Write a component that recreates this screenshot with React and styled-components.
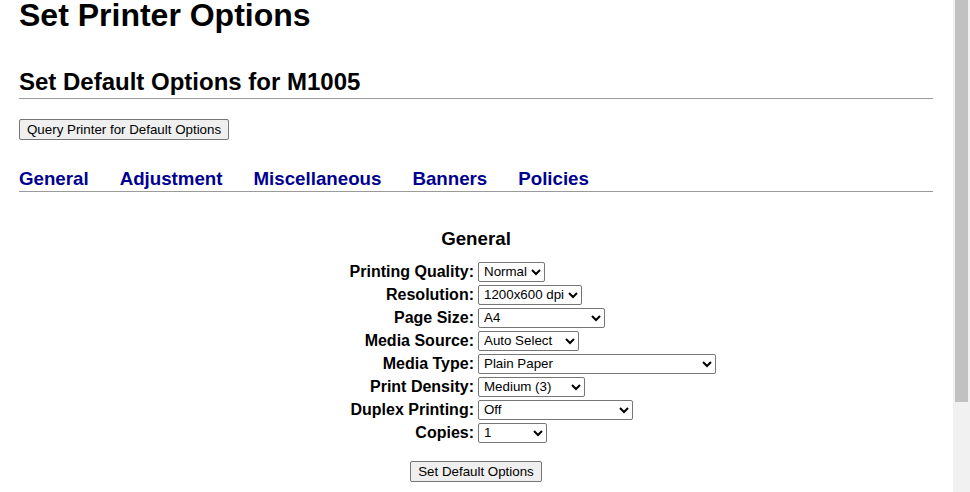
import React from "react";
import styled, { createGlobalStyle } from "styled-components";

const Global = createGlobalStyle`
  html, body { margin: 0; padding: 0; background: #ffffff; overflow: hidden; }
  body { font-family: "Liberation Sans", Arial, sans-serif; color: #000; }
`;

const Page = styled.div`
  width: 953px;
  box-sizing: border-box;
  padding: 0 20px 0 19px;
`;

const Title = styled.h1`
  margin: 0;
  font-size: 32px;
  line-height: 30px;
  font-weight: bold;
`;

const Subtitle = styled.h2`
  margin: 38px 0 0;
  font-size: 24px;
  line-height: 28px;
  font-weight: bold;
  padding-bottom: 2px;
  border-bottom: 1px solid #9a9a9a;
`;

const Button = styled.button`
  font-family: "Liberation Sans", Arial, sans-serif;
  font-size: 13.333px;
  height: 21px;
  padding: 0 7px;
  margin: ${(p) => p.$mt || 0}px 0 0;
  border: 1px solid #767676;
  border-radius: 2px;
  background: #efefef;
  color: #000;
  line-height: 19px;
`;

const Tabs = styled.nav`
  margin-top: 28px;
  display: flex;
  gap: 31px;
  padding-bottom: 1px;
  border-bottom: 1px solid #9a9a9a;
`;

const Tab = styled.a`
  font-size: 18.72px;
  line-height: 22px;
  font-weight: bold;
  color: #000090;
  text-decoration: none;
`;

const Section = styled.section`
  display: flex;
  flex-direction: column;
  align-items: center;
`;

const SectionTitle = styled.h3`
  margin: 36px 0 0;
  font-size: 18.72px;
  line-height: 22px;
  font-weight: bold;
`;

const Form = styled.div`
  align-self: stretch;
  margin-top: 10px;
  display: grid;
  grid-template-columns: 1fr 1fr;
  grid-auto-rows: 23px;
  column-gap: 4px;
  align-items: center;
`;

const Label = styled.label`
  text-align: right;
  font-size: 16px;
  font-weight: bold;
  line-height: 19px;
`;

const Select = styled.select`
  justify-self: start;
  width: ${(p) => p.$w}px;
  height: 20px;
  box-sizing: border-box;
  font-family: "Liberation Sans", Arial, sans-serif;
  font-size: 13.333px;
  color: #000;
  background: #fff;
  border: 1px solid #767676;
  border-radius: 2px;
  padding: 0 0 0 1px;
`;

const options = [
  ["Printing Quality:", "Normal", 67],
  ["Resolution:", "1200x600 dpi", 104],
  ["Page Size:", "A4", 127],
  ["Media Source:", "Auto Select", 101],
  ["Media Type:", "Plain Paper", 238],
  ["Print Density:", "Medium (3)", 107],
  ["Duplex Printing:", "Off", 155],
  ["Copies:", "1", 69],
];

export default function App() {
  return (
    <>
      <Global />
      <Page>
        <Title>Set Printer Options</Title>
        <Subtitle>Set Default Options for M1005</Subtitle>
        <Button $mt={20}>Query Printer for Default Options</Button>
        <Tabs>
          {["General", "Adjustment", "Miscellaneous", "Banners", "Policies"].map((t) => (
            <Tab key={t} href="#">{t}</Tab>
          ))}
        </Tabs>
        <Section>
          <SectionTitle>General</SectionTitle>
          <Form>
            {options.map(([label, value, w]) => (
              <React.Fragment key={label}>
                <Label>{label}</Label>
                <Select $w={w} defaultValue={value}>
                  <option>{value}</option>
                </Select>
              </React.Fragment>
            ))}
          </Form>
          <Button $mt={17}>Set Default Options</Button>
        </Section>
      </Page>
      <ScrollTrack>
        <ScrollThumb />
      </ScrollTrack>
    </>
  );
}

const ScrollTrack = styled.div`
  position: fixed;
  top: 0;
  right: 0;
  width: 17px;
  height: 100vh;
  background: #f1f1f1;
  box-sizing: border-box;
  padding: 0 2px;
`;

const ScrollThumb = styled.div`
  height: 402px;
  background: #c1c1c1;
`;
